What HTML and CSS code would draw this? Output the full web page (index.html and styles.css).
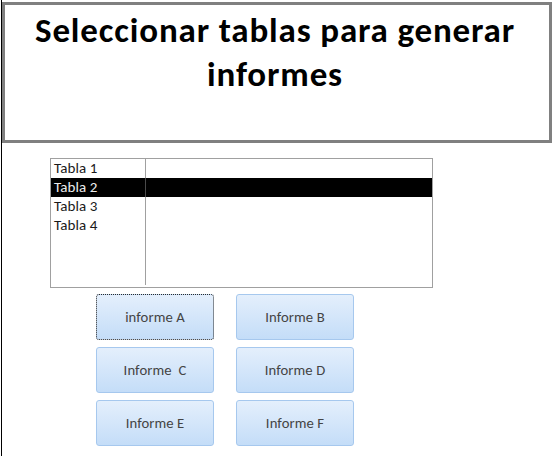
FILE: index.html
```html
<!DOCTYPE html>
<html lang="es">
<head>
<meta charset="utf-8">
<title>Seleccionar tablas para generar informes</title>
<link rel="stylesheet" href="styles.css">
</head>
<body>
<div class="page">
  <header class="header">
    <h1 class="title">Seleccionar tablas para generar informes</h1>
  </header>
  <div class="list">
    <div class="row"><span class="c1">Tabla 1</span><span class="c2"></span></div>
    <div class="row selected"><span class="c1">Tabla 2</span><span class="c2"></span></div>
    <div class="row"><span class="c1">Tabla 3</span><span class="c2"></span></div>
    <div class="row"><span class="c1">Tabla 4</span><span class="c2"></span></div>
    <div class="row filler"><span class="c1"></span><span class="c2"></span></div>
  </div>
  <div class="buttons">
    <button class="btn focused">informe A</button>
    <button class="btn">Informe B</button>
    <button class="btn">Informe&nbsp; C</button>
    <button class="btn">Informe D</button>
    <button class="btn">Informe E</button>
    <button class="btn">Informe F</button>
  </div>
</div>
</body>
</html>
```
FILE: styles.css
```css
html, body {
  margin: 0;
  padding: 0;
  background: #ffffff;
}
.page {
  margin-left: 1px;
  border-left: 1px solid #000000;
  height: 456px;
  box-sizing: border-box;
  padding-top: 2px;
  font-family: Carlito, Calibri, Lato, "Liberation Sans", sans-serif;
}
.header {
  width: 550px;
  height: 141px;
  box-sizing: border-box;
  border: 3px solid #808080;
}
.title {
  margin: 0;
  font-size: 35px;
  line-height: 44px;
  letter-spacing: 0.85px;
  font-weight: bold;
  text-align: center;
  color: #000000;
  padding-top: 3px;
  padding-right: 4px;
}
.list {
  margin: 15px 0 0 48px;
  width: 383px;
  height: 130px;
  box-sizing: border-box;
  border: 1px solid #a0a0a0;
  display: flex;
  flex-direction: column;
  padding-bottom: 2px;
  font-size: 15px;
  letter-spacing: 0.1px;
  color: #1a1a1a;
}
.row {
  display: flex;
  height: 19px;
  line-height: 19px;
}
.row.filler {
  flex: 1;
}
.c1 {
  width: 95px;
  box-sizing: border-box;
  padding-left: 3px;
  border-right: 1px solid #a0a0a0;
}
.c2 {
  flex: 1;
}
.row.selected {
  background: #000000;
  color: #ececec;
}
.row.selected .c1 {
  border-right-color: #4a4a4a;
}
.buttons {
  margin: 6px 0 0 94px;
  display: grid;
  grid-template-columns: 118px 118px;
  grid-auto-rows: 46px;
  column-gap: 22px;
  row-gap: 7px;
}
.btn {
  font-family: inherit;
  font-size: 14.67px;
  letter-spacing: 0.1px;
  color: #444444;
  border: 1px solid #a6c8ee;
  border-radius: 3px;
  background: linear-gradient(#e4effc, #c4ddf8);
  padding: 0 0 1px 0;
  margin: 0;
}
.btn.focused {
  border: 1px dotted #2a2a2a;
}
```
